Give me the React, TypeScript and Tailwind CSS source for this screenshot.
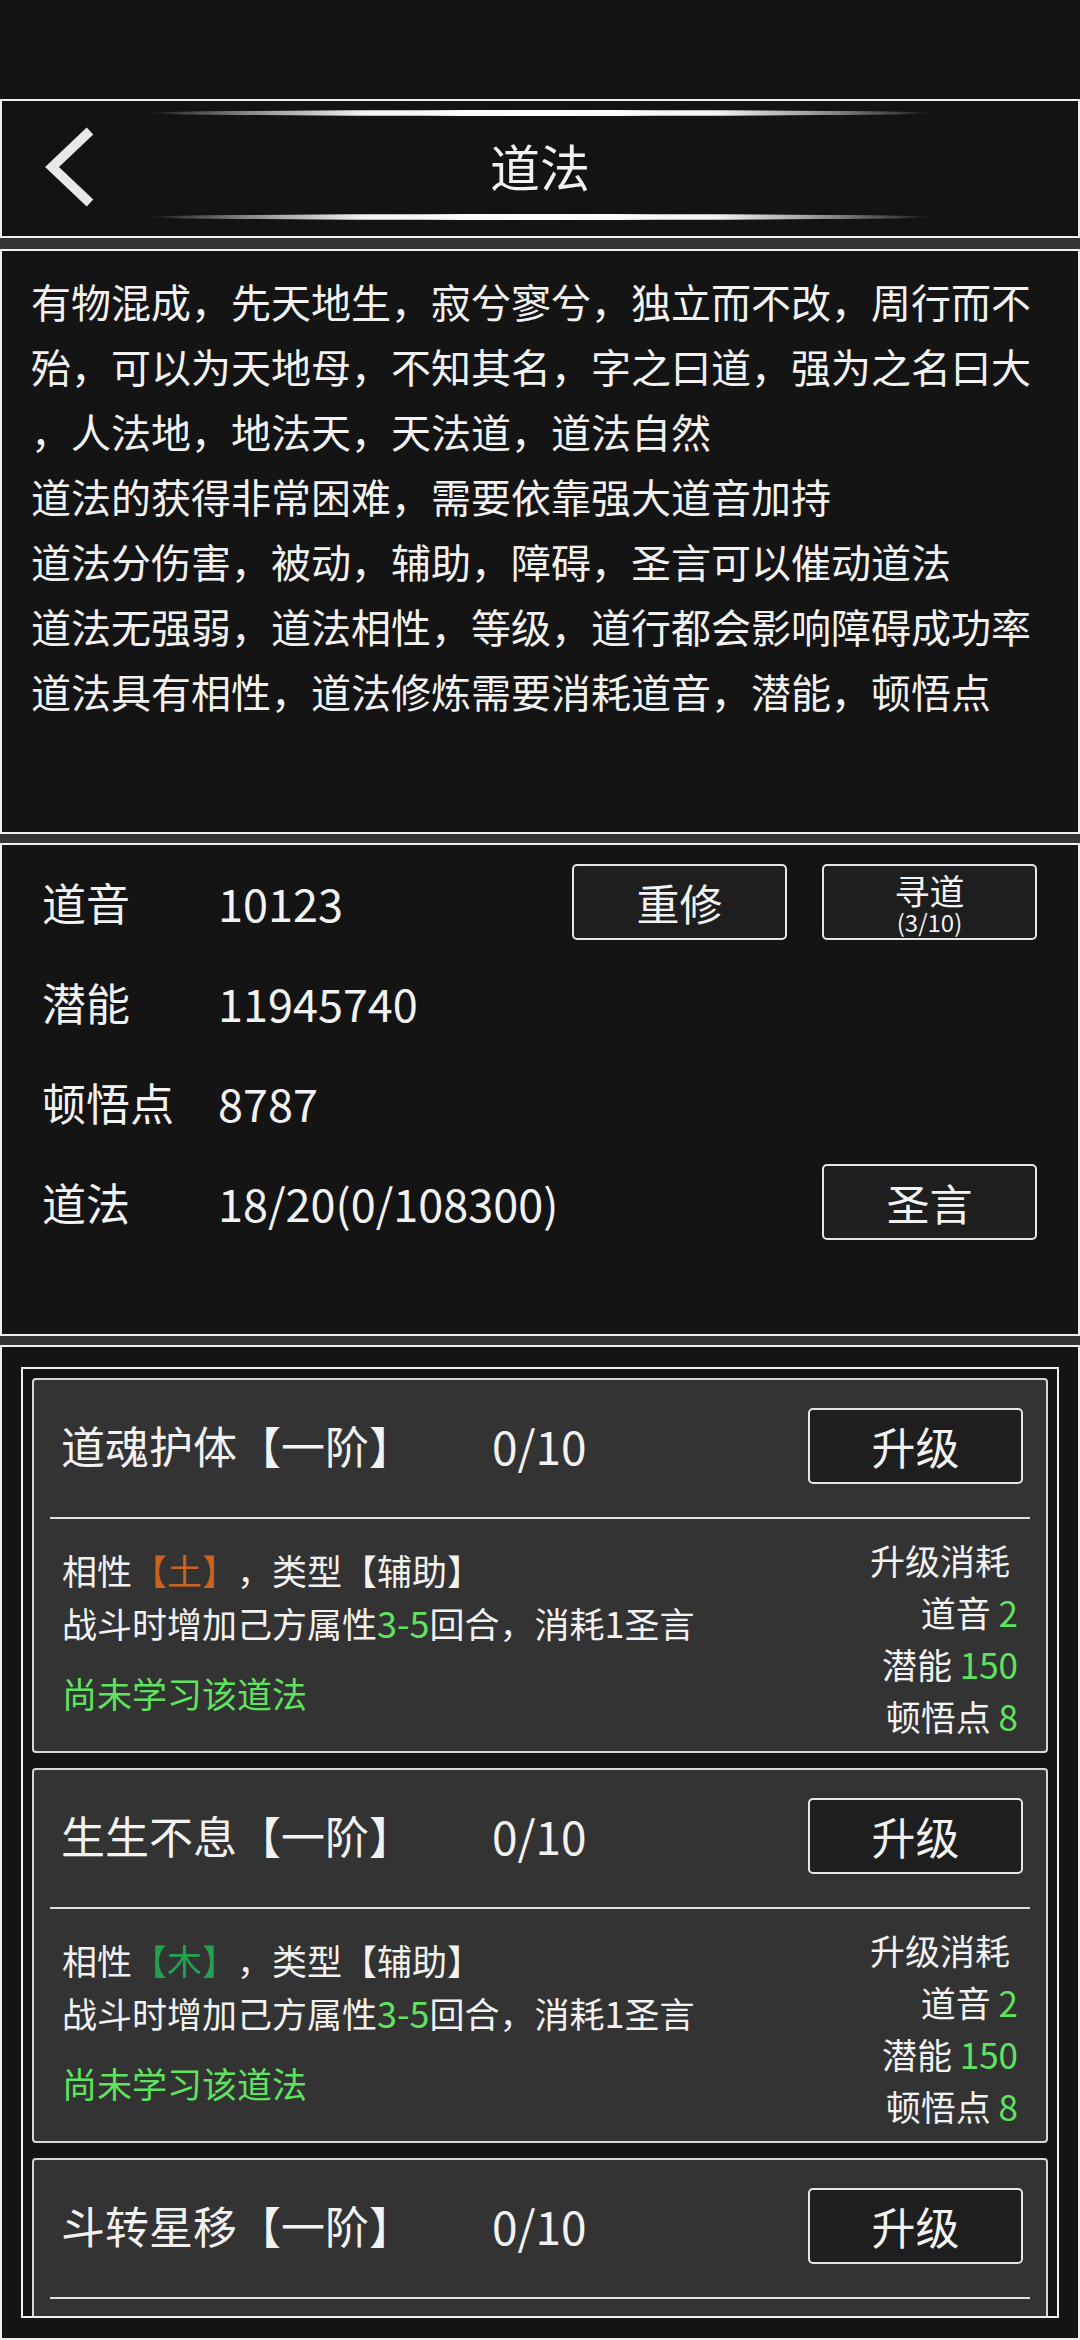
import React from "react";

const intro = [
  "有物混成，先天地生，寂兮寥兮，独立而不改，周行而不",
  "殆，可以为天地母，不知其名，字之曰道，强为之名曰大",
  "，人法地，地法天，天法道，道法自然",
  "道法的获得非常困难，需要依靠强大道音加持",
  "道法分伤害，被动，辅助，障碍，圣言可以催动道法",
  "道法无强弱，道法相性，等级，道行都会影响障碍成功率",
  "道法具有相性，道法修炼需要消耗道音，潜能，顿悟点",
];

const skills = [
  { name: "道魂护体【一阶】", element: "土", elementColor: "text-[#c8641e]", clipped: false },
  { name: "生生不息【一阶】", element: "木", elementColor: "text-[#22a152]", clipped: false },
  { name: "斗转星移【一阶】", element: "金", elementColor: "text-[#e0c040]", clipped: true },
];

function GlowLine() {
  return (
    <div className="h-[6px] w-[790px] rounded-[50%] bg-[linear-gradient(to_right,transparent_0%,#4a4a4a_6%,#a0a0a0_16%,#f4f4f4_28%,#ffffff_50%,#f4f4f4_72%,#a0a0a0_84%,#4a4a4a_94%,transparent_100%)]" />
  );
}

function Button({ children, className = "" }: { children: React.ReactNode; className?: string }) {
  return (
    <div
      className={
        "flex h-[76px] w-[215px] flex-col items-center justify-center rounded-[5px] border-2 border-[#e6e6e6] bg-[#1e1e1e] text-[#f2f2f2] " +
        className
      }
    >
      {children}
    </div>
  );
}

function StatRow({ label, value, children }: { label: string; value: string; children?: React.ReactNode }) {
  return (
    <div className="flex h-[100px] items-center pl-[40px] pr-[41px]">
      <span className="w-[176px] text-[44px] leading-none">{label}</span>
      <span className="text-[45px] leading-none">{value}</span>
      <div className="flex-1" />
      {children}
    </div>
  );
}

function SkillCard({
  name,
  element,
  elementColor,
  clipped,
}: {
  name: string;
  element: string;
  elementColor: string;
  clipped: boolean;
}) {
  return (
    <div className="h-[375px] shrink-0 rounded-[4px] border-2 border-[#d6d6d6] bg-[#333333]">
      <div className="flex h-[130px] items-center pl-[27px] pr-[23px]">
        <span className="w-[431px] text-[44px] leading-none">{name}</span>
        <span className="text-[46px] leading-none">0/10</span>
        <div className="flex-1" />
        <Button className="mt-[2px]">
          <span className="text-[44px] leading-none">升级</span>
        </Button>
      </div>
      <div className="mx-[16px] mt-[7px] h-[2px] bg-[#e2e2e2]" />
      {!clipped && (
        <div className="flex">
          <div className="flex-1 pl-[28px] pt-[24px] text-[35px]">
            <div className="leading-[53px]">
              相性<span className={elementColor}>【{element}】</span>，类型【辅助】
            </div>
            <div className="leading-[53px]">
              战斗时增加己方属性<span className="text-[36px] text-[#5fe35f]">3-5</span>回合，消耗
              <span className="text-[36px]">1</span>圣言
            </div>
            <div className="mt-[17px] leading-[53px] text-[#5fe35f]">尚未学习该道法</div>
          </div>
          <div className="pr-[28px] pt-[15px] text-right text-[35px] leading-[52px]">
            <div className="mr-[8px]">升级消耗</div>
            <div>
              道音 <span className="text-[#5fe35f]">2</span>
            </div>
            <div>
              潜能 <span className="text-[#5fe35f]">150</span>
            </div>
            <div>
              顿悟点 <span className="text-[#5fe35f]">8</span>
            </div>
          </div>
        </div>
      )}
    </div>
  );
}

export default function App() {
  return (
    <div className="flex h-[2340px] w-[1080px] flex-col overflow-hidden bg-[#353535] font-['Noto_Sans_CJK_SC','Noto_Sans',sans-serif] text-[#f2f2f2] [text-spacing-trim:space-all]">
      <div className="h-[99px] shrink-0 bg-[#121212]" />

      {/* title bar */}
      <div className="flex h-[139px] shrink-0 flex-col items-center border-2 border-[#f0f0f0] bg-[#131313]">
        <div className="mt-[9px]">
          <GlowLine />
        </div>
        <div className="grid h-[98px] w-full grid-cols-[1fr_auto_1fr] items-center">
          <div className="pl-[42px] pt-[4px]">
            <svg width="52" height="80" viewBox="0 0 52 80">
              <polyline
                points="46,4 8,40 46,76"
                fill="none"
                stroke="#e8e8e8"
                strokeWidth="9.5"
                strokeLinecap="butt"
                strokeLinejoin="miter"
              />
            </svg>
          </div>
          <span className="text-[50px] leading-none">道法</span>
          <div />
        </div>
        <GlowLine />
      </div>

      <div className="h-[11px] shrink-0" />

      {/* description */}
      <div className="h-[585px] shrink-0 border-2 border-[#f0f0f0] bg-[#141414] pl-[29px] pt-[18px]">
        {intro.map((line, i) => (
          <div key={i} className="whitespace-nowrap text-[40px] leading-[65px]">
            {line}
          </div>
        ))}
      </div>

      <div className="h-[9px] shrink-0" />

      {/* stats */}
      <div className="h-[493px] shrink-0 border-2 border-[#f0f0f0] bg-[#141414] pt-[7px]">
        <StatRow label="道音" value="10123">
          <div className="flex gap-[35px]">
            <Button>
              <span className="text-[43px] leading-none">重修</span>
            </Button>
            <Button>
              <span className="text-[35px] leading-[38px]">寻道</span>
              <span className="text-[24px] leading-[25px]">(3/10)</span>
            </Button>
          </div>
        </StatRow>
        <StatRow label="潜能" value="11945740" />
        <StatRow label="顿悟点" value="8787" />
        <StatRow label="道法" value="18/20(0/108300)">
          <Button>
            <span className="text-[43px] leading-none">圣言</span>
          </Button>
        </StatRow>
      </div>

      <div className="h-[9px] shrink-0" />

      {/* skill list */}
      <div className="flex-1 border-2 border-[#f0f0f0] bg-[#141414] px-[19px] pt-[20px]">
        <div className="flex h-[951px] flex-col gap-[15px] overflow-hidden border-2 border-[#f0f0f0] px-[9px] pt-[9px]">
          {skills.map((s) => (
            <SkillCard key={s.name} {...s} />
          ))}
        </div>
      </div>
    </div>
  );
}
